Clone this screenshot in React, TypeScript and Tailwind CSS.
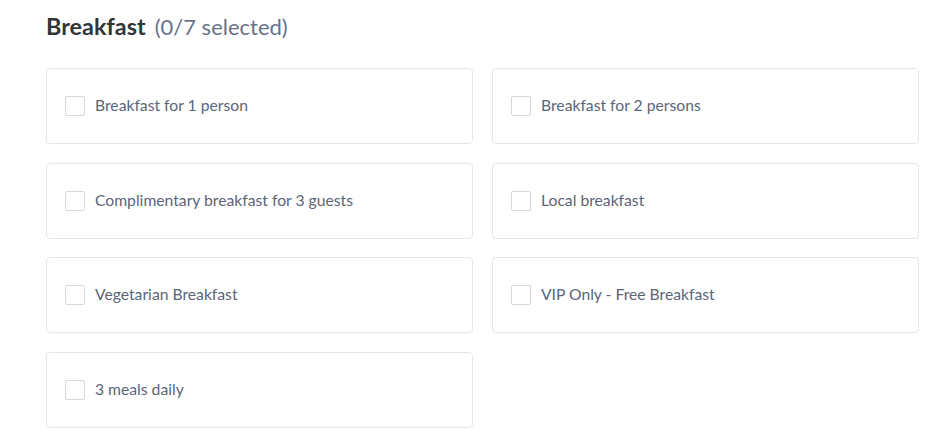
import React from 'react';

const options = [
  'Breakfast for 1 person',
  'Breakfast for 2 persons',
  'Complimentary breakfast for 3 guests',
  'Local breakfast',
  'Vegetarian Breakfast',
  'VIP Only - Free Breakfast',
  '3 meals daily',
];

export default function App() {
  return (
    <div className="w-[946px] h-[438px] bg-white overflow-hidden pl-[46px] pr-[27px] pt-[11px] font-['Lato',sans-serif]">
      <h2 className="flex items-baseline gap-[9px] leading-[30px]">
        <span className="text-[23.4px] font-bold text-[#333638]">Breakfast</span>
        <span className="text-[22px] text-[#67728a]">(0/7 selected)</span>
      </h2>
      <div className="grid grid-cols-2 gap-x-[19px] gap-y-[18.5px] mt-[26px]">
        {options.map((o) => (
          <label key={o} className="h-[76px] flex items-center gap-[10px] px-[18px] border border-[#e3e6ea] rounded-[4px] bg-white cursor-pointer">
            <span className="w-[20px] h-[20px] border border-[#d3d7de] rounded-[2px] bg-white shrink-0" />
            <span className="text-[15.7px] text-[#5b6579]">{o}</span>
          </label>
        ))}
      </div>
    </div>
  );
}
